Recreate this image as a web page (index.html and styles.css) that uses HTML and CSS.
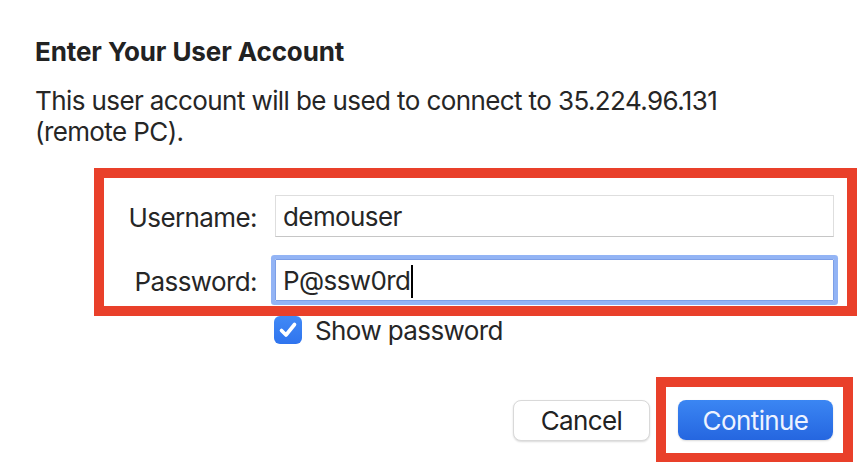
FILE: index.html
```html
<!DOCTYPE html>
<html lang="en">
<head>
    <meta charset="UTF-8">
    <meta name="viewport" content="width=device-width, initial-scale=1.0">
    <title>Enter Your User Account</title>
    <link rel="stylesheet" href="styles.css">
</head>
<body>
    <div class="dialog">
        <h1 class="title">Enter Your User Account</h1>
        <p class="intro">This user account will be used to connect to 35.224.96.131 (remote PC).</p>

        <div class="credentials highlight">
            <label class="field-label">Username:</label>
            <div class="field">demouser</div>
            <label class="field-label">Password:</label>
            <div class="field focused">P@ssw0rd<span class="caret"></span></div>
        </div>

        <div class="options">
            <span class="checkbox">
                <svg viewBox="0 0 28 28" width="28" height="28">
                    <path d="M7.5 14.5 L12 19 L20.5 8.5" fill="none" stroke="#fff" stroke-width="3.6" stroke-linecap="round" stroke-linejoin="round"/>
                </svg>
            </span>
            <span>Show password</span>
        </div>

        <div class="actions">
            <button class="btn">Cancel</button>
            <div class="highlight action-box">
                <button class="btn primary">Continue</button>
            </div>
        </div>
    </div>
</body>
</html>
```

FILE: styles.css
```css
body {
    margin: 0;
    background-color: #fff;
    font-family: Inter, "Noto Sans", sans-serif;
    color: #262626;
    letter-spacing: -0.6px;
    overflow: hidden;
}
.dialog {
    padding: 36px 11px 0 35px;
}
.title {
    margin: 0;
    font-size: 26px;
    line-height: 32px;
    font-weight: 700;
    letter-spacing: -0.1px;
    color: #222;
}
.intro {
    margin: 17px 0 0;
    max-width: 730px;
    font-size: 26px;
    line-height: 31px;
}
.highlight {
    border: 10px solid #e9402a;
    box-sizing: border-box;
}
.credentials {
    width: 763px;
    margin: 21px 0 0 59px;
    padding: 17px 13px 5px 0;
    display: grid;
    grid-template-columns: 153px 1fr;
    column-gap: 18px;
    row-gap: 22px;
    align-items: center;
}
.field-label {
    text-align: right;
    font-size: 26px;
    padding-top: 2px;
}
.field {
    height: 42px;
    box-sizing: border-box;
    padding: 2px 7px 0;
    border: 1px solid #dedede;
    border-bottom-color: #c6c6c6;
    font-size: 26px;
    line-height: 38px;
    display: flex;
    align-items: center;
}
.field.focused {
    border-color: #7d9fe6;
    box-shadow: 0 0 0 4px #93b4f5;
    border-radius: 1px;
}
.caret {
    display: inline-block;
    width: 2px;
    height: 33px;
    margin-left: 1px;
    background-color: #000;
}
.options {
    margin-left: 239px;
    display: flex;
    align-items: center;
    gap: 13px;
    font-size: 26px;
    height: 28px;
}
.checkbox {
    width: 28px;
    height: 28px;
    border-radius: 6px;
    background: linear-gradient(#4189f6, #2f74ee);
    display: flex;
}
.actions {
    margin-top: 33px;
    display: flex;
    justify-content: flex-end;
    align-items: center;
    gap: 6px;
    padding-right: 4px;
}
.action-box {
    padding: 13px 10px 13px 12px;
}
.btn {
    font-family: inherit;
    font-size: 26px;
    letter-spacing: -0.6px;
    width: 137px;
    height: 41px;
    border: 1px solid #d9d9d9;
    border-radius: 8px;
    background-color: #fff;
    color: #222;
    box-shadow: 0 1px 2px rgba(0,0,0,0.15);
    padding: 0;
}
.btn.primary {
    width: 155px;
    height: 40px;
    border: none;
    background: linear-gradient(#3b86f3, #2566e0);
    color: #eef3ff;
}
```
